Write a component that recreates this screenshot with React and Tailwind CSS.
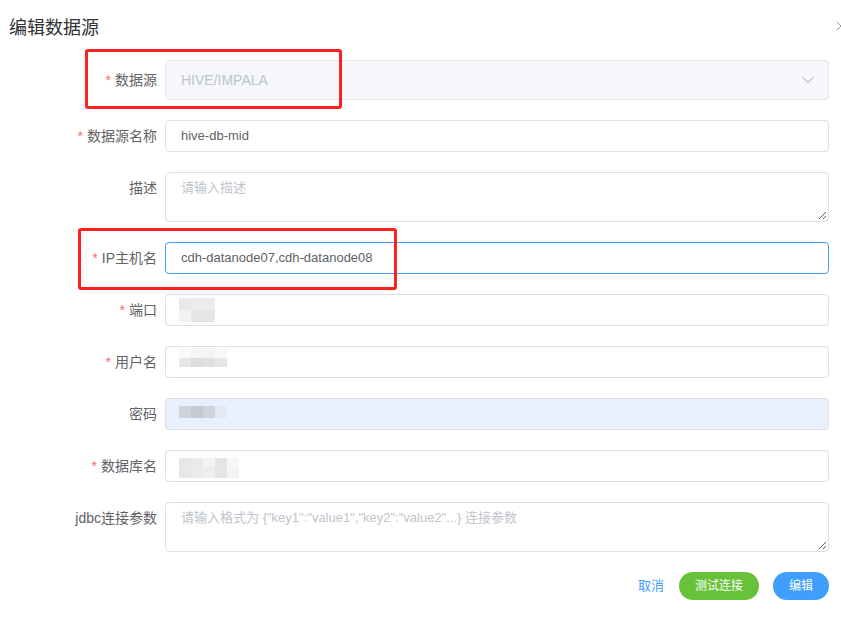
import { ChevronDown, ChevronRight } from 'lucide-react'

const font = { fontFamily: '"Liberation Sans", "Noto Sans CJK SC", sans-serif' }

// pixelated (mosaic) masks over the sensitive values
function Mosaic({ rows, top = 4 }) {
  return (
    <div className="absolute left-[14px] flex flex-col" style={{ top }}>
      {rows.map((row, i) => (
        <div key={i} className="flex">
          {row.colors.map((c, j) => (
            <div key={j} className="w-[12px]" style={{ height: row.h, background: c }} />
          ))}
        </div>
      ))}
    </div>
  )
}

function Label({ required, children, tall }) {
  return (
    <div
      className={`w-[165px] shrink-0 pr-2 text-right text-[14px] text-[#606266] ${tall ? 'h-10 leading-10' : 'h-8 leading-8'}`}
    >
      {required && <span className="mr-1 text-[#f56c6c]">*</span>}
      {children}
    </div>
  )
}

function Field({ label, required, children, tall }) {
  return (
    <div className="mb-5 flex">
      <Label required={required} tall={tall}>{label}</Label>
      <div className="relative flex-1">{children}</div>
    </div>
  )
}

function Grip() {
  return (
    <svg className="absolute bottom-[3px] right-[3px]" width="8" height="8" viewBox="0 0 8 8">
      <path d="M1 8 L8 1 M5 8 L8 5" stroke="#555" strokeWidth="1" />
    </svg>
  )
}

export default function App() {
  return (
    <div className="relative h-[621px] w-[841px] overflow-hidden bg-white" style={font}>
      {/* Header */}
      <div className="flex h-[60px] items-start justify-between pl-[9px] pt-[15px]">
        <h2 className="text-[18px] leading-[26px] text-[#303133]">编辑数据源</h2>
        <ChevronRight className="mr-[-6px] mt-[3px] h-[16px] w-[16px] text-[#909399]" strokeWidth={1.5} />
      </div>

      {/* Form */}
      <div className="pr-[12px]">
        <Field label="数据源" required tall>
          <div className="flex h-10 items-center justify-between rounded border border-[#e4e7ed] bg-[#f5f7fa] px-[15px] text-[14px] text-[#c0c4cc]">
            <span>HIVE/IMPALA</span>
            <ChevronDown className="mr-[-5px] h-[20px] w-[20px] text-[#c0c4cc]" strokeWidth={1.3} />
          </div>
        </Field>

        <Field label="数据源名称" required>
          <div className="flex h-8 items-center rounded border border-[#dcdfe6] px-[15px] text-[13px] text-[#606266]">
            hive-db-mid
          </div>
        </Field>

        <Field label="描述">
          <div className="h-[50px] rounded border border-[#dcdfe6] px-[15px] pt-[5px] text-[13px] leading-5 text-[#c0c4cc]">
            请输入描述
          </div>
          <Grip />
        </Field>

        <Field label="IP主机名" required>
          <div className="flex h-8 items-center rounded border border-[#409eff] px-[15px] text-[13px] text-[#606266]">
            cdh-datanode07,cdh-datanode08
          </div>
        </Field>

        <Field label="端口" required>
          <div className="h-8 rounded border border-[#dcdfe6]" />
          <Mosaic
            top={4}
            rows={[
              { h: 12, colors: ['#e9e9e9', '#ebebeb', '#ececec'] },
              { h: 12, colors: ['#f3f3f3', '#e6e6e6', '#e6e6e6'] },
            ]}
          />
        </Field>

        <Field label="用户名" required>
          <div className="h-8 rounded border border-[#dcdfe6]" />
          <Mosaic
            top={2}
            rows={[
              { h: 10, colors: ['#fafafa', '#f6f6f6', '#f4f4f4', '#fafafa'] },
              { h: 9, colors: ['#e6e6e6', '#dcdcdc', '#e0e0e0', '#e6e6e6'] },
            ]}
          />
        </Field>

        <Field label="密码">
          <div className="h-8 rounded border border-[#dcdfe6] bg-[#e8f0fe]" />
          <Mosaic top={8} rows={[{ h: 12, colors: ['#cfd3dc', '#c5c9d4', '#cfd3dc', '#e2e8f4'] }]} />
        </Field>

        <Field label="数据库名" required>
          <div className="h-8 rounded border border-[#dcdfe6]" />
          <Mosaic
            top={8}
            rows={[
              { h: 8, colors: ['#e7e7e7', '#eaeaea', '#f4f4f4', '#e4e4e4', '#f7f7f7'] },
              { h: 12, colors: ['#e7e7e7', '#ebebeb', '#eeeeee', '#e5e5e5', '#f3f3f3'] },
            ]}
          />
        </Field>

        <Field label="jdbc连接参数">
          <div className="h-[50px] rounded border border-[#dcdfe6] px-[15px] pt-[5px] text-[13px] leading-5 text-[#c0c4cc]">
            请输入格式为 {'{"key1":"value1","key2":"value2"...}'} 连接参数
          </div>
          <Grip />
        </Field>

        {/* Actions */}
        <div className="mt-[7px] flex items-center justify-end">
          <button className="mr-[15px] text-[13px] text-[#409eff]">取消</button>
          <button className="h-[28px] w-[80px] rounded-full bg-[#67c23a] text-[12px] text-white">测试连接</button>
          <button className="ml-[14px] h-[28px] w-[56px] rounded-full bg-[#409eff] text-[12px] text-white">编辑</button>
        </div>
      </div>

      {/* Red annotation boxes */}
      <div className="absolute left-[85px] top-[49px] h-[60px] w-[257px] rounded-[3px] border-[3px] border-[#ff1f1f]" />
      <div className="absolute left-[78px] top-[228px] h-[62px] w-[319px] rounded-[3px] border-[3px] border-[#ff1f1f]" />
    </div>
  )
}
